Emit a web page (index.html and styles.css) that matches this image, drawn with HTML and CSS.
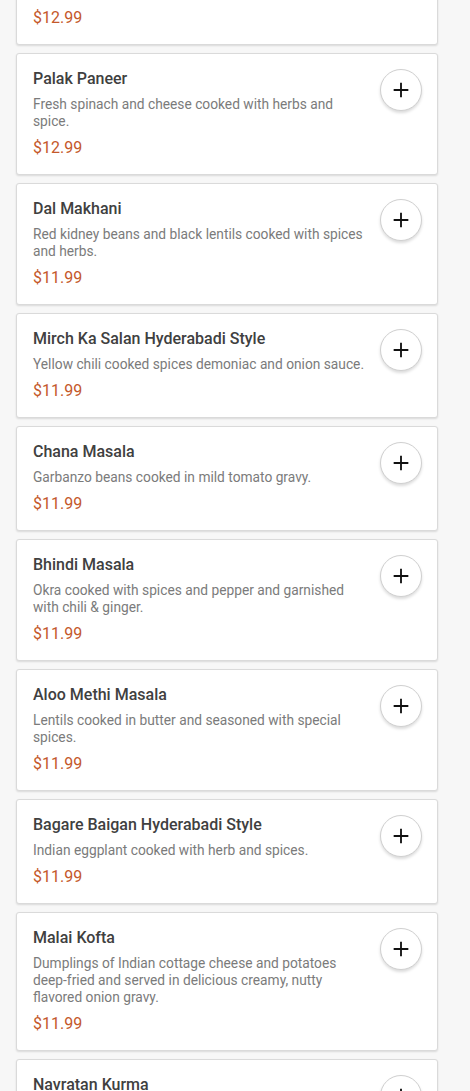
FILE: index.html
```html
<!DOCTYPE html>
<html>
<head>
<meta charset="utf-8">
<link rel="stylesheet" href="styles.css">
</head>
<body>
<div class="list">
  <div class="card">
    <div class="info">
      <div class="title">Paneer Tikka Masala</div>
      <div class="desc">Cottage cheese cooked in creamy tomato sauce with herbs and spices.</div>
      <div class="price">$12.99</div>
    </div>
    <button class="add"><svg viewBox="0 0 24 24" width="22" height="22"><path d="M12 4v16M4 12h16" stroke="#111" stroke-width="2"/></svg></button>
  </div>
  <div class="card">
    <div class="info">
      <div class="title">Palak Paneer</div>
      <div class="desc">Fresh spinach and cheese cooked with herbs and spice.</div>
      <div class="price">$12.99</div>
    </div>
    <button class="add"><svg viewBox="0 0 24 24" width="22" height="22"><path d="M12 4v16M4 12h16" stroke="#111" stroke-width="2"/></svg></button>
  </div>
  <div class="card">
    <div class="info">
      <div class="title">Dal Makhani</div>
      <div class="desc">Red kidney beans and black lentils cooked with spices and herbs.</div>
      <div class="price">$11.99</div>
    </div>
    <button class="add"><svg viewBox="0 0 24 24" width="22" height="22"><path d="M12 4v16M4 12h16" stroke="#111" stroke-width="2"/></svg></button>
  </div>
  <div class="card">
    <div class="info">
      <div class="title">Mirch Ka Salan Hyderabadi Style</div>
      <div class="desc">Yellow chili cooked spices demoniac and onion sauce.</div>
      <div class="price">$11.99</div>
    </div>
    <button class="add"><svg viewBox="0 0 24 24" width="22" height="22"><path d="M12 4v16M4 12h16" stroke="#111" stroke-width="2"/></svg></button>
  </div>
  <div class="card">
    <div class="info">
      <div class="title">Chana Masala</div>
      <div class="desc">Garbanzo beans cooked in mild tomato gravy.</div>
      <div class="price">$11.99</div>
    </div>
    <button class="add"><svg viewBox="0 0 24 24" width="22" height="22"><path d="M12 4v16M4 12h16" stroke="#111" stroke-width="2"/></svg></button>
  </div>
  <div class="card">
    <div class="info">
      <div class="title">Bhindi Masala</div>
      <div class="desc">Okra cooked with spices and pepper and garnished with chili &amp; ginger.</div>
      <div class="price">$11.99</div>
    </div>
    <button class="add"><svg viewBox="0 0 24 24" width="22" height="22"><path d="M12 4v16M4 12h16" stroke="#111" stroke-width="2"/></svg></button>
  </div>
  <div class="card">
    <div class="info">
      <div class="title">Aloo Methi Masala</div>
      <div class="desc">Lentils cooked in butter and seasoned with special spices.</div>
      <div class="price">$11.99</div>
    </div>
    <button class="add"><svg viewBox="0 0 24 24" width="22" height="22"><path d="M12 4v16M4 12h16" stroke="#111" stroke-width="2"/></svg></button>
  </div>
  <div class="card">
    <div class="info">
      <div class="title">Bagare Baigan Hyderabadi Style</div>
      <div class="desc">Indian eggplant cooked with herb and spices.</div>
      <div class="price">$11.99</div>
    </div>
    <button class="add"><svg viewBox="0 0 24 24" width="22" height="22"><path d="M12 4v16M4 12h16" stroke="#111" stroke-width="2"/></svg></button>
  </div>
  <div class="card">
    <div class="info">
      <div class="title">Malai Kofta</div>
      <div class="desc">Dumplings of Indian cottage cheese and potatoes deep-fried and served in delicious creamy, nutty flavored onion gravy.</div>
      <div class="price">$11.99</div>
    </div>
    <button class="add"><svg viewBox="0 0 24 24" width="22" height="22"><path d="M12 4v16M4 12h16" stroke="#111" stroke-width="2"/></svg></button>
  </div>
  <div class="card">
    <div class="info">
      <div class="title">Navratan Kurma</div>
      <div class="desc">Mixed vegetables cooked in a rich creamy sauce with nuts.</div>
      <div class="price">$11.99</div>
    </div>
    <button class="add"><svg viewBox="0 0 24 24" width="22" height="22"><path d="M12 4v16M4 12h16" stroke="#111" stroke-width="2"/></svg></button>
  </div>
</div>
</body>
</html>
```
FILE: styles.css
```css
html, body {
  margin: 0;
  padding: 0;
  background: #f7f7f7;
  font-family: Roboto, "Liberation Sans", Arial, sans-serif;
}
.list {
  display: flex;
  flex-direction: column;
  gap: 8px;
  width: 422px;
  margin: -77px 0 0 16px;
}
.card {
  display: flex;
  align-items: flex-start;
  gap: 10px;
  background: #fff;
  border: 1px solid #dadada;
  border-radius: 3px;
  box-shadow: 0 1px 2px rgba(0,0,0,0.12);
  padding: 15px 16px 16px 16px;
}
.info {
  flex: 1;
  min-width: 0;
}
.title {
  font-size: 16px;
  font-weight: 500;
  line-height: 20px;
  color: #404040;
}
.desc {
  margin-top: 7px;
  font-size: 13.75px;
  line-height: 17px;
  color: #7b7b7b;
}
.price {
  margin-top: 8px;
  font-size: 16px;
  line-height: 20px;
  color: #c4582a;
}
.add {
  flex: none;
  width: 42px;
  height: 42px;
  margin-top: 0;
  margin-right: -1px;
  border-radius: 50%;
  border: 1px solid #d0d0d0;
  background: #fff;
  box-shadow: 0 2px 3px rgba(0,0,0,0.14);
  display: flex;
  align-items: center;
  justify-content: center;
  padding: 0;
}
.add svg {
  display: block;
}
```
